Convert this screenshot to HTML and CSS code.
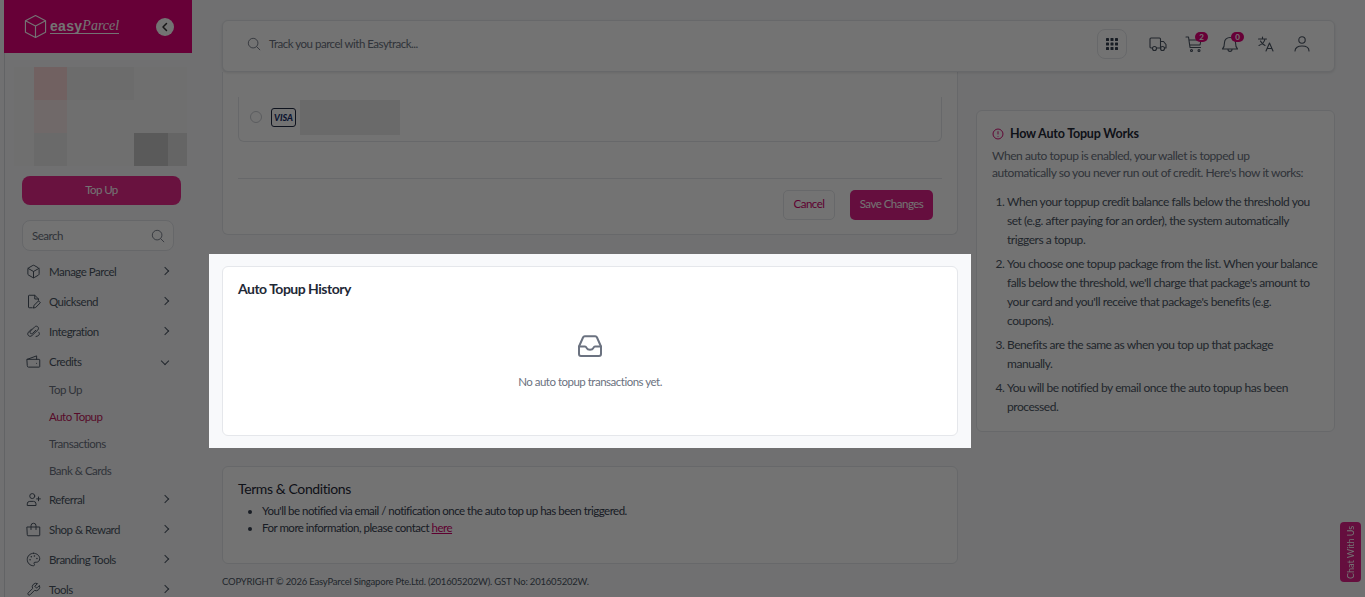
FILE: index.html
```html
<!DOCTYPE html>
<html lang="en">
<head>
  <meta charset="UTF-8">
  <meta name="viewport" content="width=device-width, initial-scale=1.0">
  <title>Auto Topup</title>
  <link rel="stylesheet" href="styles.css">
</head>
<body>

  <div class="app">
    <aside class="sidebar">
      <div class="brand">
        <div class="logo">
          <svg class="logo-box" viewBox="0 0 24 26" fill="none" stroke="currentColor" stroke-width="1.2" stroke-linejoin="round"><path d="M12 1.5 22.5 7v12L12 24.5 1.5 19V7z"/><path d="M1.500 7 12 12.500 22.500 7M12 12.500v12"/></svg>
          <span class="logo-easy">easy</span><span class="logo-parcel">Parcel</span>
        </div>
        <button class="collapse">
          <svg viewBox="0 0 10 10" fill="none" stroke="currentColor" stroke-width="1.5" stroke-linecap="round" stroke-linejoin="round"><path d="M6.500 1.500 3 5l3.500 3.500"/></svg>
        </button>
      </div>

      <div class="account">
        <div class="blur-row">
          <span class="blur edge b3"></span><span class="blur b1"></span><span class="blur b2"></span><span class="blur b2"></span><span class="blur b3"></span><span class="blur edge b3"></span>
        </div>
        <div class="blur-row">
          <span class="blur edge b3"></span><span class="blur b4"></span><span class="blur b3"></span><span class="blur b3"></span><span class="blur b3"></span><span class="blur edge b3"></span>
        </div>
        <div class="blur-row">
          <span class="blur edge b3"></span><span class="blur b5"></span><span class="blur b3"></span><span class="blur b3"></span><span class="blur b6"></span><span class="blur edge b7"></span>
        </div>
      </div>
      <button class="topup-btn">Top Up</button>

      <div class="side-search">
        <span>Search</span>
        <svg viewBox="0 0 16 16" fill="none" stroke="currentColor" stroke-width="1"><circle cx="7" cy="7" r="5.500"/><path d="m11 11 4 4"/></svg>
      </div>

      <nav class="menu">
        <a class="menu-item">
          <svg viewBox="0 0 24 24"><path d="M21 8a2 2 0 0 0-1-1.730l-7-4a2 2 0 0 0-2 0l-7 4A2 2 0 0 0 3 8v8a2 2 0 0 0 1 1.730l7 4a2 2 0 0 0 2 0l7-4A2 2 0 0 0 21 16Z"/><path d="m3.300 7 8.700 5 8.700-5M12 22V12"/></svg>
          <span>Manage Parcel</span><i class="chev"></i>
        </a>
        <a class="menu-item">
          <svg viewBox="0 0 24 24"><path d="M10 22H5a1 1 0 0 1-1-1V3a1 1 0 0 1 1-1h9l6 6v2M14 2v6h6"/><path d="m12 22 1-4 7-7 3 3-7 7z"/></svg>
          <span>Quicksend</span><i class="chev"></i>
        </a>
        <a class="menu-item">
          <svg viewBox="0 0 24 24"><path d="M9 8 4 13c-3.500 4 1.500 9 5.500 5.500L19 9.500c3-3.500-1.500-8-5-5L7 11.500c-2 2.500 1 5.500 3.500 3.500l5-5"/><path d="m20 13 1 1c1 2 0 4-2 5l-3 1"/></svg>
          <span>Integration</span><i class="chev"></i>
        </a>
        <a class="menu-item">
          <svg viewBox="0 0 24 24"><path d="M2 8.500 17 3v5.500"/><path d="M2 8.500h19a1 1 0 0 1 1 1V20a1 1 0 0 1-1 1H4a2 2 0 0 1-2-2z"/><path d="M17 15h.01"/></svg>
          <span>Credits</span><i class="chev open"></i>
        </a>
        <a class="sub-item">Top Up</a>
        <a class="sub-item current">Auto Topup</a>
        <a class="sub-item">Transactions</a>
        <a class="sub-item">Bank &amp; Cards</a>
        <a class="menu-item">
          <svg viewBox="0 0 24 24"><path d="M16 21v-2a4 4 0 0 0-4-4H6a4 4 0 0 0-4 4v2z"/><circle cx="10" cy="6.500" r="4"/><path d="M20 8v6M23 11h-6"/></svg>
          <span>Referral</span><i class="chev"></i>
        </a>
        <a class="menu-item">
          <svg viewBox="0 0 24 24"><path d="M2 8h20v13a1 1 0 0 1-1 1H3a1 1 0 0 1-1-1z"/><path d="M8 12V6a4 4 0 0 1 8 0v6"/></svg>
          <span>Shop &amp; Reward</span><i class="chev"></i>
        </a>
        <a class="menu-item">
          <svg viewBox="0 0 24 24"><path d="M12 2C6.500 2 2 6.500 2 12s4.500 10 10 10c.930 0 1.650-.750 1.650-1.690 0-.440-.180-.830-.440-1.120-.290-.290-.440-.650-.440-1.130a1.640 1.640 0 0 1 1.670-1.670h2c3.050 0 5.550-2.500 5.550-5.550C21.970 6.010 17.460 2 12 2z"/><path d="M6.500 12.500h.01M8.500 7.500h.01M13.500 6.500h.01M17.500 10.500h.01" stroke-width="2.500"/></svg>
          <span>Branding Tools</span><i class="chev"></i>
        </a>
        <a class="menu-item">
          <svg viewBox="0 0 24 24"><path d="M14.700 6.300a1 1 0 0 0 0 1.400l1.600 1.600a1 1 0 0 0 1.400 0l3.770-3.770a6 6 0 0 1-7.940 7.940l-6.910 6.910a2.120 2.120 0 0 1-3-3l6.910-6.910a6 6 0 0 1 7.940-7.940l-3.760 3.760z"/></svg>
          <span>Tools</span><i class="chev"></i>
        </a>
      </nav>
    </aside>

    <div class="main">
      <header class="topbar">
        <div class="track">
          <svg viewBox="0 0 16 16" fill="none" stroke="currentColor" stroke-width="1"><circle cx="7" cy="7" r="5.500"/><path d="m11 11 4 4"/></svg>
          <span>Track you parcel with Easytrack...</span>
        </div>
        <div class="top-icons">
          <span class="apps">
            <svg viewBox="0 0 14 14" fill="currentColor"><rect x="1" y="1" width="3" height="3" rx=".6"/><rect x="5.500" y="1" width="3" height="3" rx=".6"/><rect x="10" y="1" width="3" height="3" rx=".6"/><rect x="1" y="5.500" width="3" height="3" rx=".6"/><rect x="5.500" y="5.500" width="3" height="3" rx=".6"/><rect x="10" y="5.500" width="3" height="3" rx=".6"/><rect x="1" y="10" width="3" height="3" rx=".6"/><rect x="5.500" y="10" width="3" height="3" rx=".6"/><rect x="10" y="10" width="3" height="3" rx=".6"/></svg>
          </span>
          <span class="top-icon">
            <svg viewBox="0 0 18 18"><path d="M3.500 13H2a1 1 0 0 1-1-1V4a1 1 0 0 1 1-1h8.500a1 1 0 0 1 1 1v9H7.500M11.500 6.500h3l2.500 3V13h-1.500M11.500 13h.5"/><circle cx="5.500" cy="13.500" r="2"/><circle cx="13.500" cy="13.500" r="2"/></svg>
          </span>
          <span class="top-icon">
            <svg viewBox="0 0 18 18"><path d="M1 2h2.500l1.500 10.500h10.500M4 5h12l-1 5H5"/><circle cx="6.500" cy="15.500" r="1"/><circle cx="14" cy="15.500" r="1"/></svg>
            <b class="badge">2</b>
          </span>
          <span class="top-icon">
            <svg viewBox="0 0 18 18"><path d="M1.500 14c1.500-1.500 2-2.500 2-6.500 0-3 2.500-5 5.500-5s5.500 2 5.500 5c0 4 .5 5 2 6.500zM7 14.500c0 2.500 4 2.500 4 0"/></svg>
            <b class="badge">0</b>
          </span>
          <span class="top-icon">
            <svg viewBox="0 0 18 18"><path d="M1.500 4h8M5.500 2v2M8 4c-.5 3-2.500 5-6 6.500M3.500 6c.8 2 2.500 3.500 4.500 4.500M9 16l3.500-8 3.500 8M10 13.500h5"/></svg>
          </span>
          <span class="top-icon">
            <svg viewBox="0 0 18 18"><circle cx="9" cy="5" r="3.200"/><path d="M2 16c0-3.500 3-5 7-5s7 1.500 7 5"/></svg>
          </span>
        </div>
      </header>

      <div class="content">
        <div class="col-left">
          <section class="card card-form">
            <div class="pay-box">
              <span class="radio"></span>
              <span class="visa">VISA</span>
              <span class="blur-card"></span>
            </div>
            <div class="form-actions">
              <button class="btn-cancel">Cancel</button>
              <button class="btn-save">Save Changes</button>
            </div>
          </section>

          <section class="card card-history">
            <h2>Auto Topup History</h2>
            <div class="empty">
              <svg viewBox="0 0 26 24" fill="none" stroke="currentColor" stroke-width="2" stroke-linejoin="round" stroke-linecap="round"><path d="M2 12.500 6 3.500a2 2 0 0 1 1.800-1.200h10.400A2 2 0 0 1 20 3.500l4 9V20a2 2 0 0 1-2 2H4a2 2 0 0 1-2-2z"/><path d="M2 12.500h6c1 0 1.300.8 1.800 1.700.5 1 1.400 1.500 3.200 1.500s2.700-.5 3.200-1.500c.5-.9.8-1.700 1.800-1.700h6"/></svg>
              <p>No auto topup transactions yet.</p>
            </div>
            <div class="spotlight"></div>
          </section>

          <section class="card card-terms">
            <h3>Terms &amp; Conditions</h3>
            <ul>
              <li>You'll be notified via email / notification once the auto top up has been triggered.</li>
              <li>For more information, please contact <a class="here">here</a></li>
            </ul>
          </section>

          <p class="copyright">COPYRIGHT © 2026 EasyParcel Singapore Pte.Ltd. (201605202W). GST No: 201605202W.</p>
        </div>

        <aside class="card card-help">
          <h3>
            <svg viewBox="0 0 14 14" fill="none" stroke="currentColor" stroke-width="1.100"><circle cx="7" cy="7" r="5.800"/><path d="M7 3.800v3.700M7 9.500v.8"/></svg>
            How Auto Topup Works
          </h3>
          <p>When auto topup is enabled, your wallet is topped up automatically so you never run out of credit. Here's how it works:</p>
          <ol>
            <li>When your toppup credit balance falls below the threshold you set (e.g. after paying for an order), the system automatically triggers a topup.</li>
            <li>You choose one topup package from the list. When your balance falls below the threshold, we'll charge that package's amount to your card and you'll receive that package's benefits (e.g. coupons).</li>
            <li>Benefits are the same as when you top up that package manually.</li>
            <li>You will be notified by email once the auto topup has been processed.</li>
          </ol>
        </aside>
      </div>
    </div>
  </div>

  <a class="chat-tab">Chat With Us</a>

</body>
</html>
```

FILE: styles.css
```css
* {
  box-sizing: border-box;
}

html, body {
  height: 100%;
  margin: 0;
  overflow: hidden;
}

body {
  font-family: Lato, "Open Sans", Arial, sans-serif;
  font-size: 11.5px;
  letter-spacing: -.5px;
  color: #374151;
  background-color: #f8f9fb;
}

button {
  letter-spacing: inherit;
}

.app {
  display: flex;
  height: 597px;
  padding-left: 4px;
  overflow: hidden;
}

/* sidebar */
.sidebar {
  width: 188px;
  flex-shrink: 0;
  background-color: #f8f9fb;
  border-left: 1px solid #d9dbe0;
  margin-right: 30px;
}

.brand {
  height: 53px;
  margin-left: -1px;
  background-color: #e5007a;
  color: #fff;
  display: flex;
  align-items: center;
  justify-content: space-between;
  padding: 0 18px 0 20px;
}

.logo {
  display: flex;
  align-items: center;
  color: #fff;
}

.logo-box {
  width: 23px;
  height: 25px;
  margin-right: 3px;
}

.logo-easy {
  font-family: "Liberation Sans", Arial, sans-serif;
  font-weight: bold;
  font-size: 14px;
  letter-spacing: .3px;
  border-bottom: 1px solid #fff;
  line-height: 14px;
}

.logo-parcel {
  font-family: "Liberation Serif", serif;
  font-style: italic;
  font-size: 14px;
  letter-spacing: 0;
  line-height: 14px;
  border-bottom: 1px solid #fff;
}

.collapse {
  width: 18px;
  height: 18px;
  border: none;
  padding: 4px;
  border-radius: 50%;
  background-color: #fff;
  color: #333;
  display: flex;
}

.account {
  padding: 14px 0 0 9px;
  height: 123px;
}

.blur-row {
  display: flex;
  height: 33px;
}

.blur {
  width: 33.5px;
  height: 33px;
}

.blur.edge {
  width: 19.5px;
}

.b1 { background-color: #fad8d8; }
.b2 { background-color: #efefef; }
.b3 { background-color: #f6f6f6; }
.b4 { background-color: #f8e8e8; }
.b5 { background-color: #ececec; }
.b6 { background-color: #c8c8c8; }
.b7 { background-color: #e0e0e0; }

.topup-btn {
  display: block;
  width: 159px;
  height: 29px;
  margin: 0 0 0 17px;
  padding: 0 0 2px;
  border: none;
  border-radius: 8px;
  background-color: #e8288c;
  color: #fff;
  font-family: inherit;
  font-size: 11.5px;
  letter-spacing: -.6px;
}

.side-search {
  width: 152px;
  height: 31px;
  margin: 15px 0 0 17px;
  border: 1px solid #e2e4e9;
  border-radius: 8px;
  background-color: #fff;
  display: flex;
  align-items: center;
  justify-content: space-between;
  padding: 0 8px 0 9px;
  color: #6b7280;
}

.side-search svg {
  width: 14px;
  height: 14px;
}

.menu {
  margin-top: 5px;
}

.menu-item {
  display: flex;
  align-items: center;
  height: 30px;
  padding-left: 21px;
  color: #4b5563;
}

.menu-item svg {
  width: 15px;
  height: 15px;
  margin-right: 8px;
  fill: none;
  stroke: currentColor;
  stroke-width: 1.6;
  stroke-linejoin: round;
  stroke-linecap: round;
}

.menu-item span {
  flex: 1;
}

.chev {
  width: 6px;
  height: 6px;
  margin-right: 24px;
  border-top: 1px solid #4b5563;
  border-right: 1px solid #4b5563;
  transform: rotate(45deg);
}

.chev.open {
  transform: rotate(135deg);
}

.sub-item {
  display: block;
  height: 27px;
  line-height: 28px;
  padding-left: 44px;
  color: #6b7280;
}

.sub-item.current {
  color: #c2185b;
}

/* top bar */
.main {
  width: 1113px;
  flex-shrink: 0;
  padding-top: 20px;
}

.topbar {
  height: 52px;
  display: flex;
  align-items: center;
  justify-content: space-between;
  padding: 0 14px 5px 24px;
  background-color: #fff;
  border: 1px solid #e5e7eb;
  border-radius: 6px;
  box-shadow: 0 1px 3px rgba(0, 0, 0, .1);
  position: relative;
  z-index: 1;
}

.track {
  display: flex;
  align-items: center;
  gap: 8px;
  color: #6b7280;
}

.track svg {
  width: 14px;
  height: 14px;
}

.top-icons {
  display: flex;
  align-items: center;
}

.apps {
  width: 30px;
  height: 30px;
  border: 1px solid #e5e7eb;
  border-radius: 8px;
  display: flex;
  align-items: center;
  justify-content: center;
  color: #374151;
  margin-right: 13px;
}

.apps svg {
  width: 14px;
  height: 14px;
}

.top-icon {
  position: relative;
  width: 36px;
  display: flex;
  justify-content: center;
  color: #4b5563;
}

.top-icon svg {
  width: 18px;
  height: 18px;
  fill: none;
  stroke: currentColor;
  stroke-width: 1.1;
  stroke-linejoin: round;
  stroke-linecap: round;
}

.badge {
  position: absolute;
  top: -3px;
  left: 19px;
  width: 13px;
  height: 10px;
  border-radius: 5px;
  background-color: #e5007a;
  color: #fff;
  font-size: 8px;
  letter-spacing: 0;
  line-height: 10px;
  text-align: center;
}

/* content */
.content {
  display: flex;
  align-items: flex-start;
  gap: 18px;
}

.col-left {
  width: 736px;
  flex-shrink: 0;
}

.card {
  background-color: #fff;
  border: 1px solid #e5e7eb;
  border-radius: 6px;
}

.card-form {
  height: 163px;
  border-top: none;
  border-radius: 0 0 6px 6px;
  padding: 25px 15px 0;
}

.pay-box {
  height: 45px;
  display: flex;
  align-items: center;
  padding: 0 0 4px 11px;
  border: 1px solid #e5e7eb;
  border-top: none;
  border-radius: 0 0 6px 6px;
}

.radio {
  width: 12px;
  height: 12px;
  border: 1px solid #c9ccd2;
  border-radius: 50%;
  margin-right: 9px;
}

.visa {
  width: 25px;
  height: 19px;
  border: 1px solid #1f2a44;
  border-radius: 3px;
  color: #1a2f6b;
  font-size: 9px;
  font-weight: 900;
  font-style: italic;
  letter-spacing: 0;
  line-height: 17px;
  text-align: center;
}

.blur-card {
  width: 100px;
  height: 35px;
  margin-left: 4px;
  background-color: #ececec;
}

.form-actions {
  margin-top: 36px;
  padding: 11px 9px 0 0;
  border-top: 1px solid #e5e7eb;
  display: flex;
  justify-content: flex-end;
  gap: 15px;
}

.btn-cancel, .btn-save {
  height: 30px;
  padding: 0 0 3px;
  border-radius: 5px;
  font-family: inherit;
  font-size: 11.5px;
  white-space: nowrap;
}

.btn-cancel {
  width: 52px;
  border: 1px solid #e5e7eb;
  background-color: #fff;
  color: #d1006c;
}

.btn-save {
  width: 83px;
  border: none;
  background-color: #e0218a;
  color: #fff;
}

.card-history {
  position: relative;
  height: 170px;
  margin-top: 31px;
  padding: 13px 15px;
}

.card-history h2 {
  margin: 0;
  font-size: 14px;
  font-weight: 700;
  line-height: 18px;
  color: #1f2937;
}

.empty {
  text-align: center;
  margin-top: 36px;
  color: #6b7280;
}

.empty svg {
  width: 26px;
  height: 24px;
  display: block;
  margin: 0 auto;
}

.empty p {
  margin: 17px 0 0;
  line-height: 14px;
}

/* tour highlight, everything outside it is dimmed */
.spotlight {
  position: absolute;
  top: -13px;
  left: -14px;
  right: -14px;
  bottom: -13px;
  box-shadow: 0 0 0 2000px rgba(0, 0, 0, .55);
  pointer-events: none;
  z-index: 10;
}

.card-terms {
  height: 98px;
  margin-top: 30px;
  padding: 13px 15px;
}

.card-terms h3 {
  margin: 0 0 4px;
  font-size: 14px;
  font-weight: 400;
  letter-spacing: -.4px;
  line-height: 18px;
  color: #1f2937;
}

.card-terms ul {
  margin: 0;
  padding-left: 24px;
  line-height: 17px;
  color: #374151;
}

.here {
  color: #d1006c;
  text-decoration: underline;
}

.copyright {
  margin: 11px 0 0;
  font-size: 9.5px;
  letter-spacing: -.2px;
  color: #4b5563;
  line-height: 14px;
}

.card-help {
  width: 359px;
  margin-top: 38px;
  padding: 14px 15px 16px;
  height: 322px;
  font-size: 12px;
  letter-spacing: -.45px;
  color: #4b5563;
}

.card-help h3 {
  display: flex;
  align-items: center;
  gap: 6px;
  margin: 0;
  font-size: 12.5px;
  font-weight: 700;
  letter-spacing: -.2px;
  line-height: 18px;
  color: #1f2937;
}

.card-help h3 svg {
  width: 12px;
  height: 12px;
  color: #d1006c;
}

.card-help p {
  max-width: 320px;
  margin: 4px 0 0;
  line-height: 17px;
  color: #6b7280;
}

.card-help ol {
  margin: 11px 0 0;
  padding-left: 15px;
  line-height: 19px;
}

.card-help li {
  margin-bottom: 5px;
}

.chat-tab {
  position: fixed;
  right: 4px;
  bottom: 15px;
  width: 21px;
  height: 60px;
  border-radius: 4px;
  background-color: #e0218a;
  color: #fff;
  font-size: 9px;
  letter-spacing: 0;
  writing-mode: vertical-rl;
  transform: rotate(180deg);
  text-align: center;
  line-height: 21px;
}
```
